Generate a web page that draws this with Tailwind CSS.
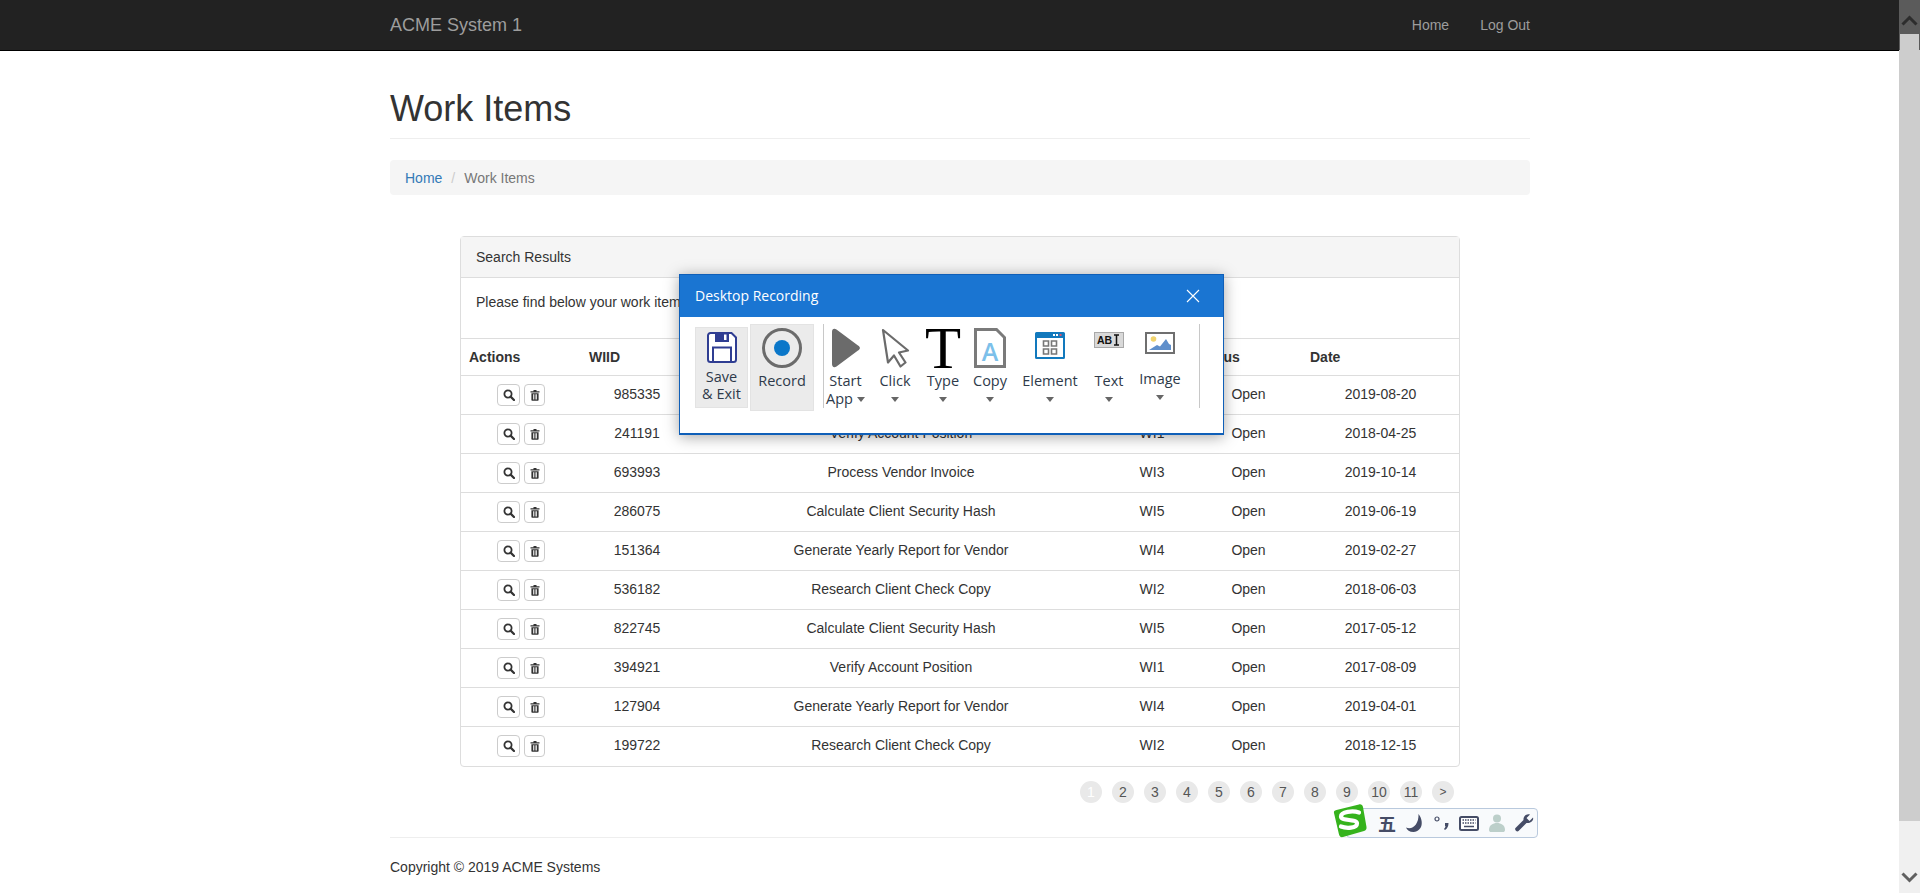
<!doctype html>
<html>

<head>
    <meta charset="UTF-8">
    <meta name="viewport" content="width=device-width, initial-scale=1.0">
    <title>Work Items</title>
    <script src="https://cdn.jsdelivr.net/npm/@tailwindcss/browser@4"></script>
</head>

<body class="relative h-[893px] w-[1920px] overflow-hidden bg-white text-sm leading-5 text-[#333] font-['Liberation_Sans',Arial,sans-serif]">
    <svg class="hidden">
        <symbol id="icon-search" viewBox="0 0 12 12">
            <circle cx="5" cy="5" r="3.6" fill="none" stroke="currentColor" stroke-width="1.8" />
            <path d="M7.6 7.6 11 11" stroke="currentColor" stroke-width="2.2" stroke-linecap="round" />
        </symbol>
        <symbol id="icon-trash" viewBox="0 0 12 12">
            <path d="M1.5 2.2h3V1h3v1.2h3v1.3h-9z" fill="currentColor" />
            <path d="M2.4 4.2h7.2V11a.8.8 0 0 1-.8.8H3.2a.8.8 0 0 1-.8-.8z M4.2 5.2v5.4h.8V5.2z M5.7 5.2v5.4h.8V5.2z M7.2 5.2v5.4h.8V5.2z" fill="currentColor" fill-rule="evenodd" />
        </symbol>
        <symbol id="caret" viewBox="0 0 8 5">
            <path d="M0 0h8L4 5z" fill="#666" />
        </symbol>
    </svg>

    <!-- navbar -->
    <nav class="h-[51px] border-b border-black bg-[#222] text-[#9d9d9d]">
        <div class="mx-auto flex h-[50px] w-[1140px] items-center justify-between">
            <a href="#" class="text-lg">ACME System 1</a>
            <div class="flex gap-[31px]">
                <a href="#">Home</a>
                <a href="#">Log Out</a>
            </div>
        </div>
    </nav>

    <main class="mx-auto w-[1140px]">
        <div class="border-b border-[#eee] pt-[38px] pb-[9px]">
            <h1 class="text-4xl leading-10">Work Items</h1>
        </div>
        <ol class="mt-[21px] flex h-[35px] items-center rounded bg-[#f5f5f5] px-[15px]">
            <li><a href="#" class="text-[#337ab7]">Home</a></li>
            <li class="px-[9px] text-[#ccc]">/</li>
            <li class="text-[#777]">Work Items</li>
        </ol>

        <section class="mx-auto mt-[41px] w-[1000px] rounded border border-[#ddd]">
            <div class="h-[41px] border-b border-[#ddd] bg-[#f5f5f5] px-[15px] py-2.5">Search Results</div>
            <div class="h-[60px] px-[15px] py-[14px]">Please find below your work items.</div>
            <table class="w-full table-fixed border-collapse">
                <colgroup>
                    <col class="w-[120px]">
                    <col class="w-[112px]">
                    <col class="w-[416px]">
                    <col class="w-[86px]">
                    <col class="w-[107px]">
                    <col class="w-[157px]">
                </colgroup>
                <thead>
                    <tr class="h-[37px] border-t border-[#ddd] text-left font-bold">
                        <th class="px-2">Actions</th>
                        <th class="px-2">WIID</th>
                        <th class="px-2">Description</th>
                        <th class="px-2">Type</th>
                        <th class="px-0.5">Status</th>
                        <th class="px-2">Date</th>
                    </tr>
                </thead>
                <tbody class="text-center">
                    <tr class="h-[39px] border-t border-[#ddd]">
                        <td><div class="flex justify-center gap-1"><button class="flex h-[22px] w-[23px] items-center justify-center rounded border border-[#ccc] text-[#333]"><svg class="size-3"><use href="#icon-search" /></svg></button><button class="flex h-[22px] w-[21px] items-center justify-center rounded border border-[#ccc] text-[#333]"><svg class="size-3"><use href="#icon-trash" /></svg></button></div></td>
                        <td class="pb-0.5">985335</td><td class="pb-0.5">Process Vendor Invoice</td><td class="pb-0.5">WI3</td><td class="pb-0.5">Open</td><td class="pb-0.5">2019-08-20</td>
                    </tr>
                    <tr class="h-[39px] border-t border-[#ddd]">
                        <td><div class="flex justify-center gap-1"><button class="flex h-[22px] w-[23px] items-center justify-center rounded border border-[#ccc] text-[#333]"><svg class="size-3"><use href="#icon-search" /></svg></button><button class="flex h-[22px] w-[21px] items-center justify-center rounded border border-[#ccc] text-[#333]"><svg class="size-3"><use href="#icon-trash" /></svg></button></div></td>
                        <td class="pb-0.5">241191</td><td class="pb-0.5">Verify Account Position</td><td class="pb-0.5">WI1</td><td class="pb-0.5">Open</td><td class="pb-0.5">2018-04-25</td>
                    </tr>
                    <tr class="h-[39px] border-t border-[#ddd]">
                        <td><div class="flex justify-center gap-1"><button class="flex h-[22px] w-[23px] items-center justify-center rounded border border-[#ccc] text-[#333]"><svg class="size-3"><use href="#icon-search" /></svg></button><button class="flex h-[22px] w-[21px] items-center justify-center rounded border border-[#ccc] text-[#333]"><svg class="size-3"><use href="#icon-trash" /></svg></button></div></td>
                        <td class="pb-0.5">693993</td><td class="pb-0.5">Process Vendor Invoice</td><td class="pb-0.5">WI3</td><td class="pb-0.5">Open</td><td class="pb-0.5">2019-10-14</td>
                    </tr>
                    <tr class="h-[39px] border-t border-[#ddd]">
                        <td><div class="flex justify-center gap-1"><button class="flex h-[22px] w-[23px] items-center justify-center rounded border border-[#ccc] text-[#333]"><svg class="size-3"><use href="#icon-search" /></svg></button><button class="flex h-[22px] w-[21px] items-center justify-center rounded border border-[#ccc] text-[#333]"><svg class="size-3"><use href="#icon-trash" /></svg></button></div></td>
                        <td class="pb-0.5">286075</td><td class="pb-0.5">Calculate Client Security Hash</td><td class="pb-0.5">WI5</td><td class="pb-0.5">Open</td><td class="pb-0.5">2019-06-19</td>
                    </tr>
                    <tr class="h-[39px] border-t border-[#ddd]">
                        <td><div class="flex justify-center gap-1"><button class="flex h-[22px] w-[23px] items-center justify-center rounded border border-[#ccc] text-[#333]"><svg class="size-3"><use href="#icon-search" /></svg></button><button class="flex h-[22px] w-[21px] items-center justify-center rounded border border-[#ccc] text-[#333]"><svg class="size-3"><use href="#icon-trash" /></svg></button></div></td>
                        <td class="pb-0.5">151364</td><td class="pb-0.5">Generate Yearly Report for Vendor</td><td class="pb-0.5">WI4</td><td class="pb-0.5">Open</td><td class="pb-0.5">2019-02-27</td>
                    </tr>
                    <tr class="h-[39px] border-t border-[#ddd]">
                        <td><div class="flex justify-center gap-1"><button class="flex h-[22px] w-[23px] items-center justify-center rounded border border-[#ccc] text-[#333]"><svg class="size-3"><use href="#icon-search" /></svg></button><button class="flex h-[22px] w-[21px] items-center justify-center rounded border border-[#ccc] text-[#333]"><svg class="size-3"><use href="#icon-trash" /></svg></button></div></td>
                        <td class="pb-0.5">536182</td><td class="pb-0.5">Research Client Check Copy</td><td class="pb-0.5">WI2</td><td class="pb-0.5">Open</td><td class="pb-0.5">2018-06-03</td>
                    </tr>
                    <tr class="h-[39px] border-t border-[#ddd]">
                        <td><div class="flex justify-center gap-1"><button class="flex h-[22px] w-[23px] items-center justify-center rounded border border-[#ccc] text-[#333]"><svg class="size-3"><use href="#icon-search" /></svg></button><button class="flex h-[22px] w-[21px] items-center justify-center rounded border border-[#ccc] text-[#333]"><svg class="size-3"><use href="#icon-trash" /></svg></button></div></td>
                        <td class="pb-0.5">822745</td><td class="pb-0.5">Calculate Client Security Hash</td><td class="pb-0.5">WI5</td><td class="pb-0.5">Open</td><td class="pb-0.5">2017-05-12</td>
                    </tr>
                    <tr class="h-[39px] border-t border-[#ddd]">
                        <td><div class="flex justify-center gap-1"><button class="flex h-[22px] w-[23px] items-center justify-center rounded border border-[#ccc] text-[#333]"><svg class="size-3"><use href="#icon-search" /></svg></button><button class="flex h-[22px] w-[21px] items-center justify-center rounded border border-[#ccc] text-[#333]"><svg class="size-3"><use href="#icon-trash" /></svg></button></div></td>
                        <td class="pb-0.5">394921</td><td class="pb-0.5">Verify Account Position</td><td class="pb-0.5">WI1</td><td class="pb-0.5">Open</td><td class="pb-0.5">2017-08-09</td>
                    </tr>
                    <tr class="h-[39px] border-t border-[#ddd]">
                        <td><div class="flex justify-center gap-1"><button class="flex h-[22px] w-[23px] items-center justify-center rounded border border-[#ccc] text-[#333]"><svg class="size-3"><use href="#icon-search" /></svg></button><button class="flex h-[22px] w-[21px] items-center justify-center rounded border border-[#ccc] text-[#333]"><svg class="size-3"><use href="#icon-trash" /></svg></button></div></td>
                        <td class="pb-0.5">127904</td><td class="pb-0.5">Generate Yearly Report for Vendor</td><td class="pb-0.5">WI4</td><td class="pb-0.5">Open</td><td class="pb-0.5">2019-04-01</td>
                    </tr>
                    <tr class="h-[39px] border-t border-[#ddd]">
                        <td><div class="flex justify-center gap-1"><button class="flex h-[22px] w-[23px] items-center justify-center rounded border border-[#ccc] text-[#333]"><svg class="size-3"><use href="#icon-search" /></svg></button><button class="flex h-[22px] w-[21px] items-center justify-center rounded border border-[#ccc] text-[#333]"><svg class="size-3"><use href="#icon-trash" /></svg></button></div></td>
                        <td class="pb-0.5">199722</td><td class="pb-0.5">Research Client Check Copy</td><td class="pb-0.5">WI2</td><td class="pb-0.5">Open</td><td class="pb-0.5">2018-12-15</td>
                    </tr>
                </tbody>
            </table>
        </section>

        <div class="mx-auto mt-[14px] flex w-[1000px] justify-end gap-2.5 pr-1.5 text-[#555]">
            <span class="flex size-[22px] items-center justify-center rounded-full bg-[#e9e9e9] text-white">1</span>
            <span class="flex size-[22px] items-center justify-center rounded-full bg-[#e9e9e9]">2</span>
            <span class="flex size-[22px] items-center justify-center rounded-full bg-[#e9e9e9]">3</span>
            <span class="flex size-[22px] items-center justify-center rounded-full bg-[#e9e9e9]">4</span>
            <span class="flex size-[22px] items-center justify-center rounded-full bg-[#e9e9e9]">5</span>
            <span class="flex size-[22px] items-center justify-center rounded-full bg-[#e9e9e9]">6</span>
            <span class="flex size-[22px] items-center justify-center rounded-full bg-[#e9e9e9]">7</span>
            <span class="flex size-[22px] items-center justify-center rounded-full bg-[#e9e9e9]">8</span>
            <span class="flex size-[22px] items-center justify-center rounded-full bg-[#e9e9e9]">9</span>
            <span class="flex size-[22px] items-center justify-center rounded-full bg-[#e9e9e9]">10</span>
            <span class="flex size-[22px] items-center justify-center rounded-full bg-[#e9e9e9]">11</span>
            <span class="flex size-[22px] items-center justify-center rounded-full bg-[#e9e9e9] text-xs">&gt;</span>
        </div>

        <footer class="mt-[34px] border-t border-[#eee] pt-[19px]">Copyright © 2019 ACME Systems</footer>
    </main>

    <!-- recording dialog, floats over the table -->
    <div class="absolute top-[274px] left-[679px] h-[161px] w-[545px] border-x border-b-2 border-[#0f5fb8] bg-white shadow-[0_2px_14px_rgba(0,0,0,0.35)] font-['Open_Sans',sans-serif] text-[14.5px] leading-[18px] text-[#2e3a4a]">
        <div class="flex h-[43px] items-center justify-between border-t border-[#0f5fb8] bg-[#1a75d2] pr-[23px] pl-[15px] text-sm text-white">
            <span>Desktop Recording</span>
            <svg class="size-[14px]" viewBox="0 0 14 14"><path d="M1 1l12 12M13 1 1 13" stroke="#fff" stroke-width="1.1" /></svg>
        </div>
        <div class="flex items-start pt-[7px] pl-[15px]">
            <button class="mt-[3px] flex h-[81px] w-[53px] flex-col items-center border border-[#e3e3e3] bg-[#ebebeb] pt-1 leading-[17px]">
                <svg class="h-[31px] w-[30px]" viewBox="0 0 30 31">
                    <path d="M1 3.5A2.5 2.5 0 0 1 3.500 1h21L29 5.500V27.500a2.500 2.500 0 0 1-2.500 2.500h-23A2.500 2.500 0 0 1 1 27.500z" fill="#fff" stroke="#2f3d92" stroke-width="2" />
                    <path d="M8 1h14v9H8z" fill="#2f3d92" />
                    <path d="M17 2.500h2.500V8H17z" fill="#fff" />
                    <path d="M6 30V15.500h18V30" fill="none" stroke="#2f3d92" stroke-width="2" />
                </svg>
                <span class="mt-[5px]">Save</span>
                <span>&amp; Exit</span>
            </button>
            <button class="ml-0.5 flex h-[87px] w-[64px] flex-col items-center border border-[#e3e3e3] bg-[#ebebeb] pt-[3px]">
                <svg class="size-10" viewBox="0 0 40 40">
                    <circle cx="20" cy="20" r="18.500" fill="none" stroke="#6b6b6b" stroke-width="3" />
                    <circle cx="20" cy="20" r="8" fill="#0b77c9" />
                </svg>
                <span class="mt-1">Record</span>
            </button>
            <div class="ml-[9px] h-[84px] w-px bg-[#c8c8c8]"></div>

            <div class="flex w-[42px] flex-col items-center pl-px">
                <svg class="mt-[4px] h-[40px] w-[29px]" viewBox="0 0 29 40"><path d="M1 4c0-3 2-4 4.500-2.500L27 17.500c2.500 1.500 2.500 3.500 0 5L5.500 38.500C3 40 1 39 1 36z" fill="#6b6b6b" /></svg>
                <span class="mt-1">Start</span>
                <span class="flex items-center gap-1">App<svg class="h-[5px] w-2"><use href="#caret" /></svg></span>
            </div>
            <div class="flex w-[58px] flex-col items-center">
                <svg class="mt-[4px] h-[40px] w-[29px]" viewBox="0 0 29 40"><path d="M2 2 27 22.500 18 24.500l6.500 10-5 4-6.500-11-6 7z" fill="#fff" stroke="#6b6b6b" stroke-width="2.200" stroke-linejoin="round" /></svg>
                <span class="mt-1">Click</span>
                <svg class="mt-[7px] h-[5px] w-2"><use href="#caret" /></svg>
            </div>
            <div class="flex w-[38px] flex-col items-center">
                <div class="flex h-[48px] items-center font-['Liberation_Serif',serif] text-[59px] leading-none text-black">T</div>
                <span>Type</span>
                <svg class="mt-[7px] h-[5px] w-2"><use href="#caret" /></svg>
            </div>
            <div class="flex w-[56px] flex-col items-center">
                <svg class="mt-[4px] h-[40px] w-[32px]" viewBox="0 0 32 40">
                    <path d="M1.500 1.500h21l8 8v29h-29z" fill="#fff" stroke="#7a7a7a" stroke-width="3" />
                    <text x="16" y="33" text-anchor="middle" font-family="Open Sans" font-size="25" font-weight="600" fill="#7cc0ea">A</text>
                </svg>
                <span class="mt-1">Copy</span>
                <svg class="mt-[7px] h-[5px] w-2"><use href="#caret" /></svg>
            </div>
            <div class="flex w-[64px] flex-col items-center">
                <svg class="mt-2 mb-[13px] h-[27px] w-[30px]" viewBox="0 0 30 27">
                    <path d="M0 1.500A1.500 1.500 0 0 1 1.500 0h27A1.500 1.500 0 0 1 30 1.500v24a1.500 1.500 0 0 1-1.500 1.500h-27A1.500 1.500 0 0 1 0 25.500z" fill="#1279bd" />
                    <path d="M2 6h26v19H2z" fill="#fff" />
                    <path d="M18 2h2v2h-2zM21 2h2v2h-2z" fill="#fff" />
                    <path d="M24.500 2h2v2h-2z" fill="#e0506a" />
                    <path d="M8.500 9h5v5h-5zM16.500 9h5v5h-5zM8.500 17h5v5h-5zM16.500 17h5v5h-5z" fill="none" stroke="#777" stroke-width="1.600" />
                </svg>
                <span class="">Element</span>
                <svg class="mt-[7px] h-[5px] w-2"><use href="#caret" /></svg>
            </div>
            <div class="flex w-[54px] flex-col items-center">
                <svg class="mt-2 mb-6 h-4 w-[30px]" viewBox="0 0 30 16">
                    <rect x="0.500" y="0.500" width="29" height="15" fill="#d9d9d9" stroke="#a8a8a8" />
                    <text x="3" y="12" font-family="Liberation Sans" font-size="10.500" font-weight="700" fill="#111">AB</text>
                    <path d="M20 3h5M22.500 3v10M20 13h5" fill="none" stroke="#111" stroke-width="1.500" />
                </svg>
                <span>Text</span>
                <svg class="mt-[7px] h-[5px] w-2"><use href="#caret" /></svg>
            </div>
            <div class="flex w-[48px] flex-col items-center">
                <svg class="mt-2 mb-4 h-[22px] w-[30px]" viewBox="0 0 30 22">
                    <rect x="1" y="1" width="28" height="20" fill="#fff" stroke="#6f6f6f" stroke-width="2" />
                    <circle cx="8.500" cy="7" r="2.800" fill="#f0d36e" />
                    <path d="M4 18 12 13l3 1.500L21 7l3 5 2 1v5z" fill="#5f8fcb" />
                </svg>
                <span>Image</span>
                <svg class="mt-[7px] h-[5px] w-2"><use href="#caret" /></svg>
            </div>
            <div class="ml-[15px] h-[84px] w-px bg-[#c8c8c8]"></div>
        </div>
    </div>

    <!-- input method toolbar -->
    <div class="absolute top-[808px] left-[1346px] flex h-[30px] w-[192px] items-center rounded-sm border border-[#b9c9dd] bg-[#f8fafc] pl-[31px] text-[#454c66]">
        <span class="w-[28px] font-['Noto_Sans_CJK_SC',sans-serif] text-[18px] leading-none font-bold">五</span>
        <svg class="h-[18px] w-[18px]" viewBox="0 0 18 18"><path d="M12.500 0c5 6 5 17-5 18C3.500 18 1 16 0 13.500c6 3 13-3 12.500-13.500z" fill="#454c66" /></svg>
        <svg class="ml-[10px] h-[16px] w-[15px]" viewBox="0 0 15 16">
            <circle cx="3" cy="4" r="2" fill="none" stroke="#454c66" stroke-width="1.200" />
            <path d="M11 8h3.500c0 3-1 5.500-3.500 7l-1-1c1-1 1.500-2 1.500-3H11z" fill="#454c66" />
        </svg>
        <svg class="ml-[10px] h-[15px] w-[20px]" viewBox="0 0 20 15">
            <rect x="1" y="1" width="18" height="13" rx="1.500" fill="#fff" stroke="#454c66" stroke-width="2" />
            <path d="M3.500 4h13M3.500 7h13" stroke="#454c66" stroke-width="1.500" stroke-dasharray="1.500 1" />
            <path d="M5 10.500h10" stroke="#454c66" stroke-width="1.500" />
        </svg>
        <svg class="ml-[10px] h-[18px] w-[16px]" viewBox="0 0 16 18">
            <circle cx="8" cy="4.500" r="4" fill="#bccfca" />
            <path d="M0 16c0-5 4-7 8-7s8 2 8 7c0 1.500-1 2-2 2H2c-1 0-2-.5-2-2z" fill="#bccfca" />
        </svg>
        <svg class="ml-[9px] size-[20px]" viewBox="0 0 20 20"><path d="M19 4.500 15.500 8 12.500 5 16 1.500C12.500.5 9 3 9.500 7L1.500 15c-1.500 1.500 1.500 4.500 3 3l8-8c4 .5 7.500-2.500 6.500-5.500z" fill="#454c66" /></svg>
    </div>
    <svg class="absolute top-[803px] left-[1332px] h-[36px] w-[36px]" viewBox="0 0 36 36">
        <path d="M4.500 7 27 1.500c2-.5 3.500.5 4 2.500l3.500 20c.3 2-.7 3.500-2.500 4L11 34c-2 .5-3.500-.5-4-2.500L2 10c-.4-1.500.5-2.600 2.500-3z" fill="#35b31c" />
        <path d="M27 9.500c-6-2-18-1-18 4 0 5 16 2 16 7s-11 5-16 3" fill="none" stroke="#fff" stroke-width="4.200" stroke-linecap="round" />
    </svg>

    <!-- page scrollbar -->
    <div class="absolute top-0 right-0 flex h-[893px] w-[21px] flex-col bg-[#f0f0f0]">
        <div class="relative h-[34px] bg-[#5b5b5b]">
            <svg class="absolute top-[15px] left-[2px] h-[11px] w-[17px]" viewBox="0 0 17 11"><path d="M1.500 9.500 8.500 2.500l7 7" fill="none" stroke="#2d2d2d" stroke-width="3" /></svg>
        </div>
        <div class="h-4 border-x border-[#5b5b5b] bg-[#cdcdcd]"></div>
        <div class="h-[771px] bg-[#cdcdcd]"></div>
        <div class="relative flex-1">
            <svg class="absolute top-[51px] left-[2px] h-[11px] w-[17px]" viewBox="0 0 17 11"><path d="M1.500 1.500 8.500 8.500l7-7" fill="none" stroke="#606060" stroke-width="3" /></svg>
        </div>
    </div>
</body>

</html>
